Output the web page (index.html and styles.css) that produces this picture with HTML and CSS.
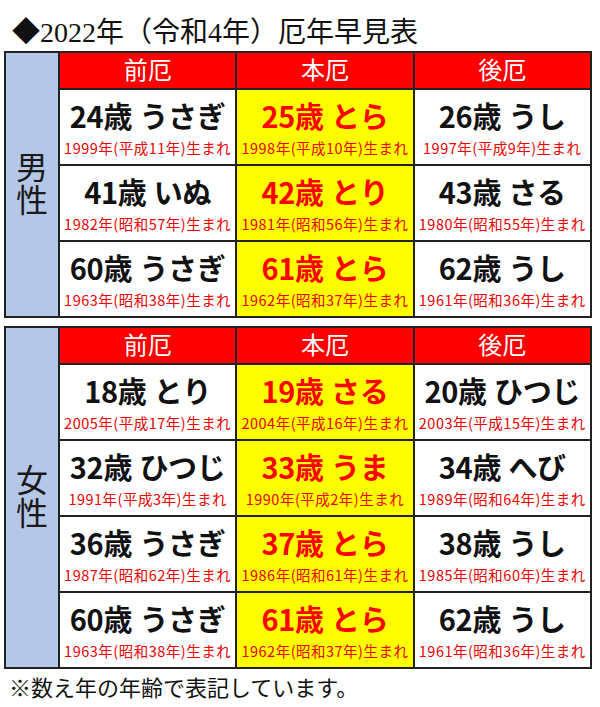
FILE: index.html
```html
<!DOCTYPE html>
<html lang="ja">
<head>
<meta charset="utf-8">
<link rel="stylesheet" href="styles.css">
</head>
<body>
<h1 class="title">◆2022年（令和4年）厄年早見表</h1>

<table class="yaku">
  <tr class="head">
    <td class="gender" rowspan="4"><span>男</span><span>性</span></td>
    <th>前厄</th><th>本厄</th><th>後厄</th>
  </tr>
  <tr>
    <td><div class="main">24歳 うさぎ</div><div class="year">1999年(平成11年)生まれ</div></td>
    <td class="hon"><div class="main">25歳 とら</div><div class="year">1998年(平成10年)生まれ</div></td>
    <td><div class="main">26歳 うし</div><div class="year">1997年(平成9年)生まれ</div></td>
  </tr>
  <tr>
    <td><div class="main">41歳 いぬ</div><div class="year">1982年(昭和57年)生まれ</div></td>
    <td class="hon"><div class="main">42歳 とり</div><div class="year">1981年(昭和56年)生まれ</div></td>
    <td><div class="main">43歳 さる</div><div class="year">1980年(昭和55年)生まれ</div></td>
  </tr>
  <tr>
    <td><div class="main">60歳 うさぎ</div><div class="year">1963年(昭和38年)生まれ</div></td>
    <td class="hon"><div class="main">61歳 とら</div><div class="year">1962年(昭和37年)生まれ</div></td>
    <td><div class="main">62歳 うし</div><div class="year">1961年(昭和36年)生まれ</div></td>
  </tr>
</table>

<table class="yaku second">
  <tr class="head">
    <td class="gender" rowspan="5"><span>女</span><span>性</span></td>
    <th>前厄</th><th>本厄</th><th>後厄</th>
  </tr>
  <tr>
    <td><div class="main">18歳 とり</div><div class="year">2005年(平成17年)生まれ</div></td>
    <td class="hon"><div class="main">19歳 さる</div><div class="year">2004年(平成16年)生まれ</div></td>
    <td><div class="main">20歳 ひつじ</div><div class="year">2003年(平成15年)生まれ</div></td>
  </tr>
  <tr>
    <td><div class="main">32歳 ひつじ</div><div class="year">1991年(平成3年)生まれ</div></td>
    <td class="hon"><div class="main">33歳 うま</div><div class="year">1990年(平成2年)生まれ</div></td>
    <td><div class="main">34歳 へび</div><div class="year">1989年(昭和64年)生まれ</div></td>
  </tr>
  <tr>
    <td><div class="main">36歳 うさぎ</div><div class="year">1987年(昭和62年)生まれ</div></td>
    <td class="hon"><div class="main">37歳 とら</div><div class="year">1986年(昭和61年)生まれ</div></td>
    <td><div class="main">38歳 うし</div><div class="year">1985年(昭和60年)生まれ</div></td>
  </tr>
  <tr>
    <td><div class="main">60歳 うさぎ</div><div class="year">1963年(昭和38年)生まれ</div></td>
    <td class="hon"><div class="main">61歳 とら</div><div class="year">1962年(昭和37年)生まれ</div></td>
    <td><div class="main">62歳 うし</div><div class="year">1961年(昭和36年)生まれ</div></td>
  </tr>
</table>

<p class="note">※数え年の年齢で表記しています。</p>
</body>
</html>
```

FILE: styles.css
```css
html, body {
  margin: 0;
  padding: 0;
  background: #ffffff;
}
body {
  width: 600px;
  font-family: "Liberation Serif", "Noto Sans CJK JP", serif;
  color: #111;
}
.title {
  margin: 0;
  padding: 16px 0 0 12px;
  height: 35px;
  font-size: 28px;
  line-height: 34px;
  font-weight: normal;
  font-family: "Liberation Serif", "Noto Sans CJK JP", serif;
  color: #111;
  white-space: nowrap;
}
.yaku {
  margin-left: 4px;
  width: 588px;
  border-collapse: collapse;
  table-layout: fixed;
  border: 2px solid #222;
}
.yaku.second {
  margin-top: 8px;
}
.yaku td, .yaku th {
  border: 2px solid #222;
  padding: 0;
  text-align: center;
}
.yaku .gender {
  width: 52px;
  background: #b4c7e7;
  font-family: "Liberation Serif", "Noto Sans CJK JP", serif;
  font-size: 32px;
  line-height: 33px;
  font-weight: normal;
  vertical-align: middle;
  color: #1a1a1a;
}
.gender span {
  display: block;
}
.head th {
  height: 35px;
  background: #ff0000;
  color: #ffffff;
  font-family: "Liberation Serif", "Noto Sans CJK JP", serif;
  font-size: 24px;
  font-weight: normal;
  line-height: 34px;
}
.yaku tr:not(.head) td:not(.gender) {
  height: 73px;
  background: #ffffff;
  vertical-align: middle;
  padding-top: 1px;
}
.yaku td.hon {
  background: #ffff00 !important;
}
.main {
  font-family: "Noto Sans CJK JP", sans-serif;
  font-weight: bold;
  font-size: 29px;
  line-height: 34px;
  color: #111;
  white-space: nowrap;
  word-spacing: 1px;
  letter-spacing: -0.3px;
}
.hon .main {
  color: #ff0000;
}
.year {
  margin-top: 6px;
  font-family: "Noto Sans CJK JP", sans-serif;
  font-size: 14.5px;
  line-height: 20px;
  color: #ee0000;
  white-space: nowrap;
  letter-spacing: 0.5px;
}
.note {
  margin: 7px 0 0 9px;
  font-size: 22px;
  line-height: 26px;
  font-family: "Liberation Serif", "Noto Sans CJK JP", serif;
  color: #111;
}
```
